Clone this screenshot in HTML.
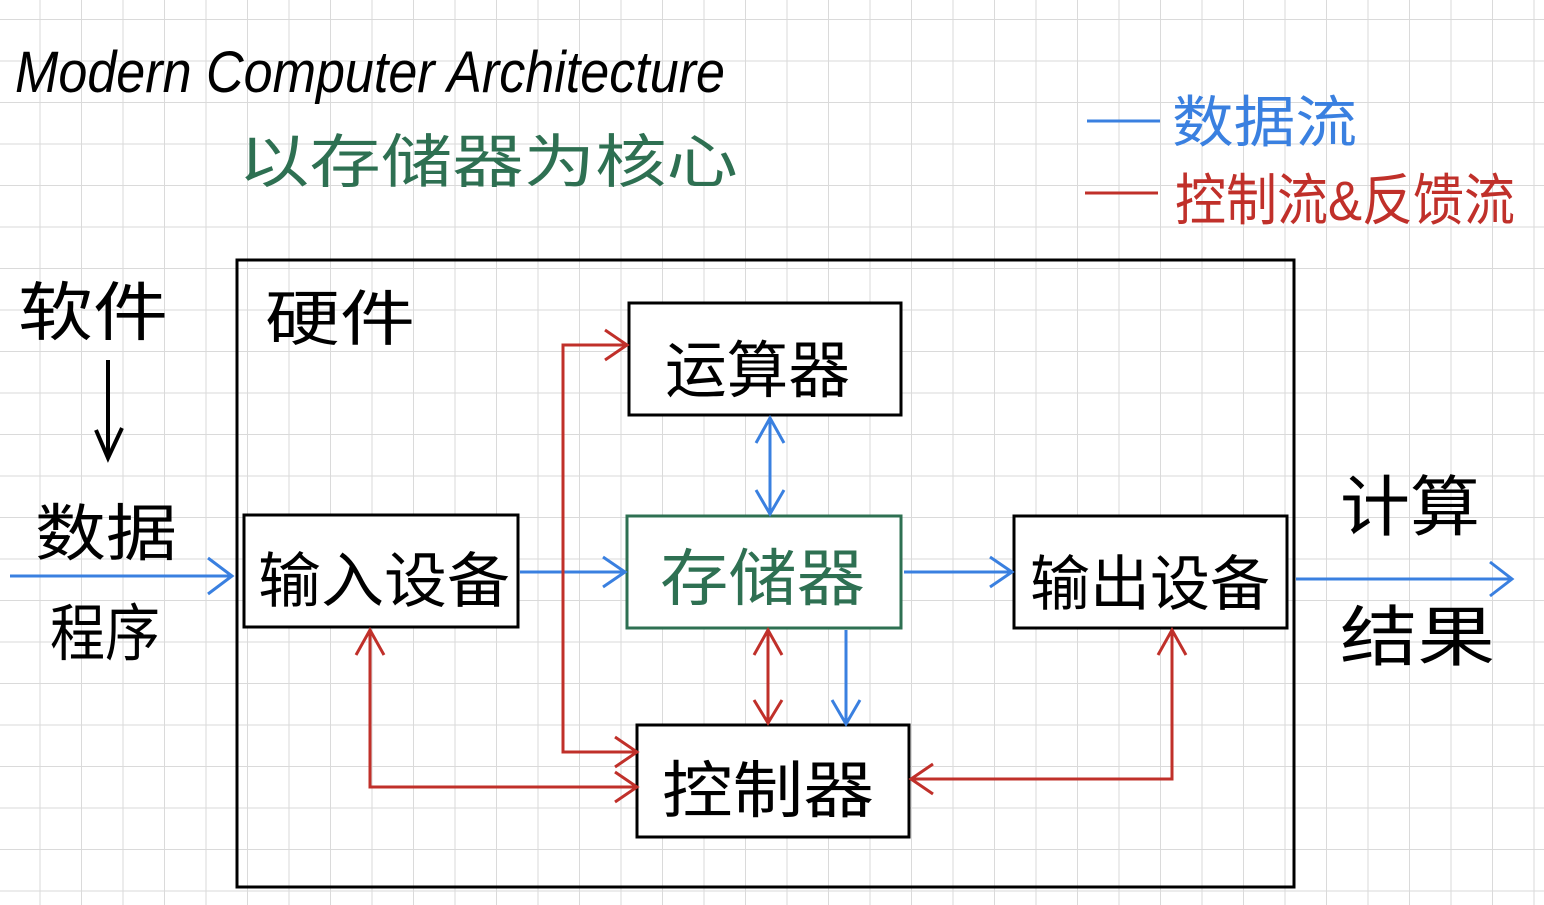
<!DOCTYPE html>
<html><head><meta charset="utf-8"><style>
html,body{margin:0;padding:0;background:#fff;width:1544px;height:905px;overflow:hidden}
svg{display:block}
text{font-family:"Liberation Sans","Noto Sans CJK SC",sans-serif}
</style></head><body>
<svg width="1544" height="905" viewBox="0 0 1544 905" xmlns="http://www.w3.org/2000/svg">
<defs>
<pattern id="g" x="39.5" y="19" width="41.5" height="41.5" patternUnits="userSpaceOnUse">
<path d="M0 0H41.5M0 0V41.5" stroke="#dadada" stroke-width="2" fill="none"/>
</pattern>
</defs>
<rect width="1544" height="905" fill="#fff"/>
<rect width="1544" height="905" fill="url(#g)"/>

<!-- title -->
<text x="15" y="92" font-size="58" font-family="Liberation Serif,serif" font-style="italic" fill="#000" textLength="710" lengthAdjust="spacingAndGlyphs">Modern Computer Architecture</text>
<text x="238" y="182" font-size="58" fill="#2e7052" font-family="Liberation Sans,Noto Sans CJK SC,sans-serif" textLength="500" lengthAdjust="spacingAndGlyphs">以存储器为核心</text>

<!-- legend -->
<line x1="1087" y1="121" x2="1160" y2="121" stroke="#3a80e0" stroke-width="3"/>
<text x="1172" y="142" font-size="56" fill="#3a80e0" textLength="185" lengthAdjust="spacingAndGlyphs">数据流</text>
<line x1="1085" y1="193" x2="1158" y2="193" stroke="#c0302a" stroke-width="3"/>
<text x="1175" y="220" font-size="56" fill="#c0302a" textLength="340" lengthAdjust="spacingAndGlyphs">控制流&amp;反馈流</text>

<!-- left labels -->
<text x="18" y="335" font-size="64" fill="#000" textLength="150" lengthAdjust="spacingAndGlyphs">软件</text>
<path d="M108 360 V455 M96 430 L108 458 L122 428" stroke="#000" stroke-width="4" fill="none"/>
<text x="35" y="555" font-size="62" fill="#000" textLength="142" lengthAdjust="spacingAndGlyphs">数据</text>
<text x="50" y="655" font-size="62" fill="#000" textLength="110" lengthAdjust="spacingAndGlyphs">程序</text>

<!-- right labels -->
<text x="1340" y="530" font-size="66" fill="#000" textLength="140" lengthAdjust="spacingAndGlyphs">计算</text>
<text x="1340" y="660" font-size="66" fill="#000" textLength="155" lengthAdjust="spacingAndGlyphs">结果</text>

<!-- outer box -->
<rect x="237" y="260" width="1057" height="627" fill="none" stroke="#000" stroke-width="3"/>
<text x="265" y="340" font-size="60" fill="#000" textLength="150" lengthAdjust="spacingAndGlyphs">硬件</text>

<!-- boxes -->
<rect x="629" y="303" width="272" height="112" fill="#fff" stroke="#000" stroke-width="3"/>
<text x="665" y="392" font-size="62" fill="#000" textLength="185" lengthAdjust="spacingAndGlyphs">运算器</text>

<rect x="627" y="516" width="274" height="112" fill="#fff" stroke="#2e7052" stroke-width="3"/>
<text x="660" y="600" font-size="62" fill="#2e7052" textLength="205" lengthAdjust="spacingAndGlyphs">存储器</text>

<rect x="244" y="515" width="274" height="112" fill="#fff" stroke="#000" stroke-width="3"/>
<text x="258" y="602" font-size="60" fill="#000" textLength="252" lengthAdjust="spacingAndGlyphs">输入设备</text>

<rect x="1014" y="516" width="273" height="112" fill="#fff" stroke="#000" stroke-width="3"/>
<text x="1030" y="605" font-size="60" fill="#000" textLength="240" lengthAdjust="spacingAndGlyphs">输出设备</text>

<rect x="637" y="725" width="272" height="112" fill="#fff" stroke="#000" stroke-width="3"/>
<text x="662" y="812" font-size="62" fill="#000" textLength="212" lengthAdjust="spacingAndGlyphs">控制器</text>

<!-- blue arrows -->
<g stroke="#3a80e0" stroke-width="3" fill="none">
<path d="M10 576 H232 M208 558 L232 576 L208 594"/>
<path d="M520 572 H625 M603 557 L625 572 L603 587"/>
<path d="M904 572 H1012 M990 557 L1012 572 L990 587"/>
<path d="M1296 579 H1512 M1490 562 L1512 579 L1490 596"/>
<path d="M770 418 V514 M756 443 L770 418 L784 443 M756 490 L770 514 L784 490"/>
<path d="M846 630 V724 M832 700 L846 724 L860 700"/>
</g>
<!-- red arrows -->
<g stroke="#c0302a" stroke-width="3" fill="none">
<path d="M627 345 H563 V752 H637 M605 330 L627 345 L605 360 M615 737 L637 752 L615 767"/>
<path d="M370 630 V787 H637 M356 655 L370 630 L384 655 M615 772 L637 787 L615 802"/>
<path d="M768 630 V723 M754 655 L768 630 L782 655 M754 700 L768 723 L782 700"/>
<path d="M911 779 H1172 V630 M933 764 L911 779 L933 794 M1158 655 L1172 630 L1186 655"/>
</g>
</svg>
</body></html>
